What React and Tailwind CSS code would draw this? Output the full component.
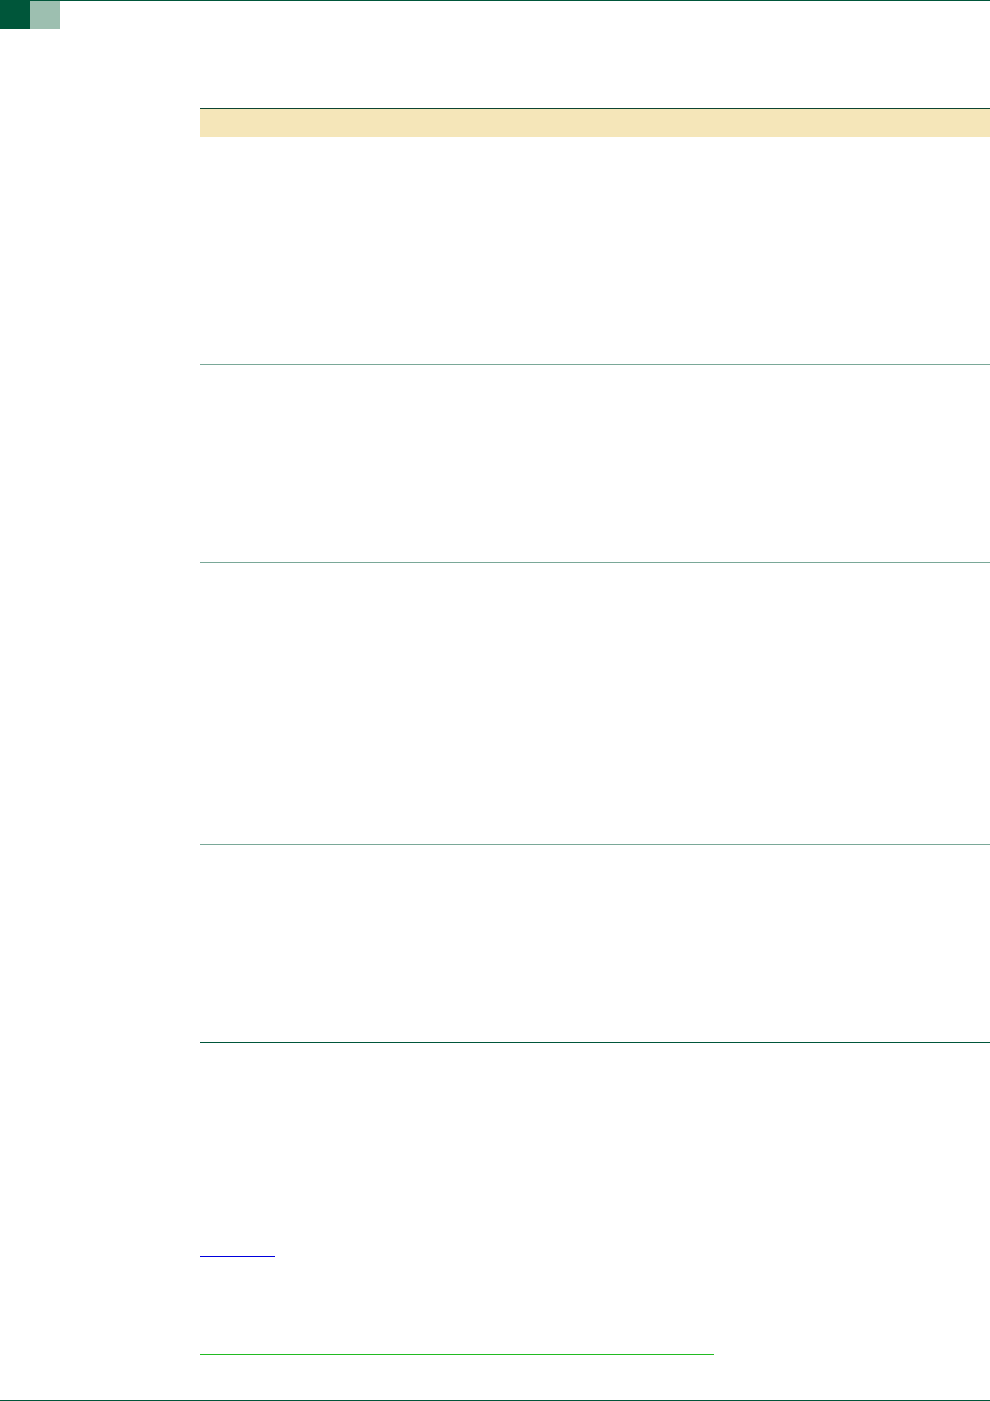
export default function App() {
  const rows = [
    { h: "h-[227px]", line: "border-[#7aa898]" },
    { h: "h-[198px]", line: "border-[#7aa898]" },
    { h: "h-[282px]", line: "border-[#7aa898]" },
    { h: "h-[198px]", line: "border-[#00563a]" },
  ];

  return (
    <div className="w-[990px] h-[1401px] bg-white flex flex-col font-['Liberation_Sans',sans-serif]">
      {/* top bar */}
      <div className="border-t border-[#00563a] flex">
        <div className="w-[30px] h-[28px] bg-[#00563a]" />
        <div className="w-[30px] h-[28px] bg-[#9dbfb0]" />
      </div>

      {/* table */}
      <div className="ml-[200px] mt-[79px] border-t border-[#0d4532]">
        <div className="h-[28px] bg-[#f5e6b9]" />
        <div className="h-px" />
        {rows.map((r, i) => (
          <div key={i} className={`${r.h} border-b ${r.line}`} />
        ))}
      </div>

      {/* links */}
      <div className="ml-[200px] mt-[213px] flex flex-col">
        <div className="w-[75px] h-0 border-b-[1.5px] border-[#0000dd]" />
        <div className="w-[514px] h-0 border-b-[1.5px] border-[#22bb22] mt-[97px]" />
      </div>

      <div className="mt-auto border-b border-[#00563a]" />
    </div>
  );
}
